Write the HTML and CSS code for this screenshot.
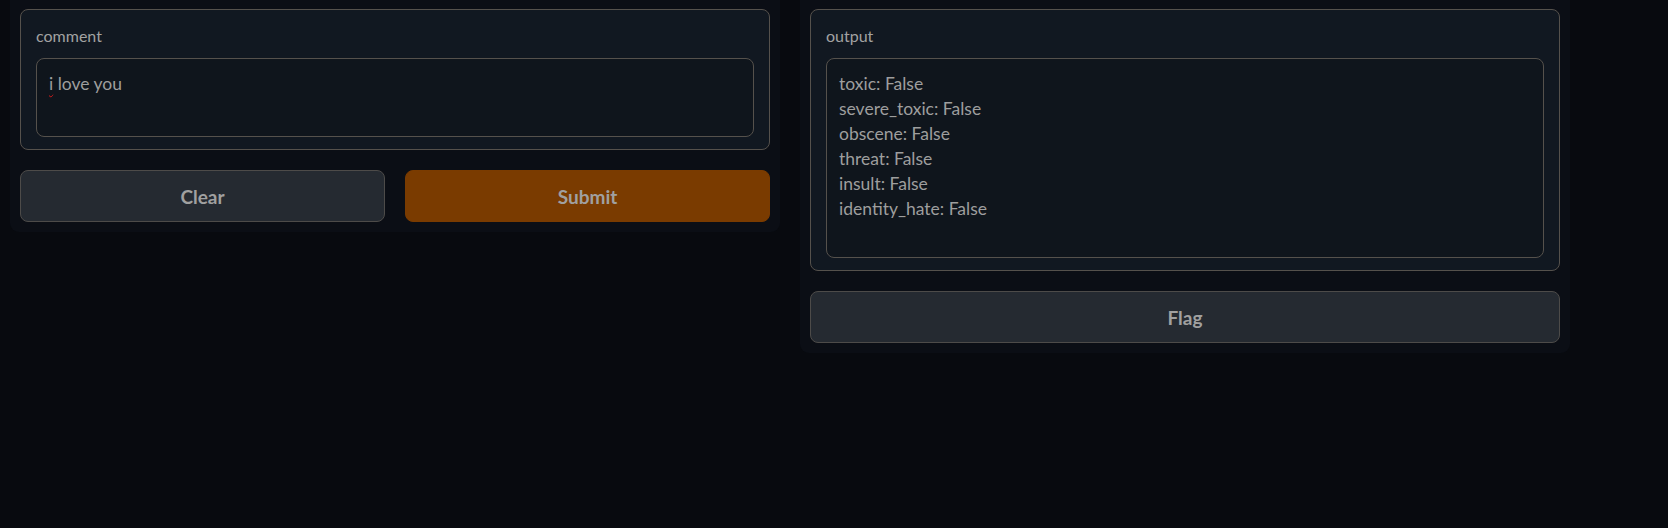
FILE: index.html
```html
<!DOCTYPE html>
<html lang="en">
<head>
<meta charset="utf-8">
<title>Toxic comment classifier</title>
<link rel="stylesheet" href="styles.css">
</head>
<body>
<div class="row">
  <div class="panel">
    <div class="box">
      <div class="label">comment</div>
      <div class="field field-in"><span class="typo">i</span> love you</div>
    </div>
    <div class="buttons">
      <button class="btn">Clear</button>
      <button class="btn btn-primary">Submit</button>
    </div>
  </div>
  <div class="panel">
    <div class="box">
      <div class="label">output</div>
      <div class="field field-out">toxic: False<br>severe_toxic: False<br>obscene: False<br>threat: False<br>insult: False<br>identity_hate: False</div>
    </div>
    <div class="buttons">
      <button class="btn">Flag</button>
    </div>
  </div>
</div>
</body>
</html>
```
FILE: styles.css
```css
html, body {
  margin: 0;
  padding: 0;
  background: #080a0f;
  height: 100%;
}
body {
  font-family: Lato, "Liberation Sans", sans-serif;
  color: #9e9e9e;
}
.row {
  display: flex;
  gap: 20px;
  padding-left: 10px;
  margin-top: -1px;
  align-items: flex-start;
}
.panel {
  width: 770px;
  box-sizing: border-box;
  padding: 10px;
  background: #0b0e15;
  border-radius: 0 0 9px 9px;
  display: flex;
  flex-direction: column;
  gap: 20px;
}
.box {
  border: 1px solid #55514c;
  border-radius: 8px;
  background: #111821;
  padding: 15px 15px 12px;
}
.label {
  font-size: 16px;
  line-height: 21px;
  margin-bottom: 12px;
  color: #a2a2a2;
}
.field {
  box-sizing: border-box;
  border: 1px solid #55514c;
  border-radius: 8px;
  background: #0f151c;
  padding: 12px 12px 10px;
  font-size: 17.5px;
  line-height: 25px;
  color: #9e9e9e;
}
.field-in { height: 79px; }
.field-out { height: 200px; }
.typo {
  text-decoration: underline wavy #d01818;
  text-decoration-thickness: 1px;
  text-underline-offset: 3px;
}
.buttons {
  display: flex;
  gap: 20px;
}
.btn {
  flex: 1;
  height: 52px;
  border: 1px solid #4d4b49;
  border-radius: 8px;
  background: #252a31;
  color: #a0a0a0;
  font-family: Lato, "Liberation Sans", sans-serif;
  font-weight: 700;
  font-size: 19px;
  padding: 0;
}
.btn-primary {
  background: #7a3b00;
  border-color: #7a3b00;
}
```
